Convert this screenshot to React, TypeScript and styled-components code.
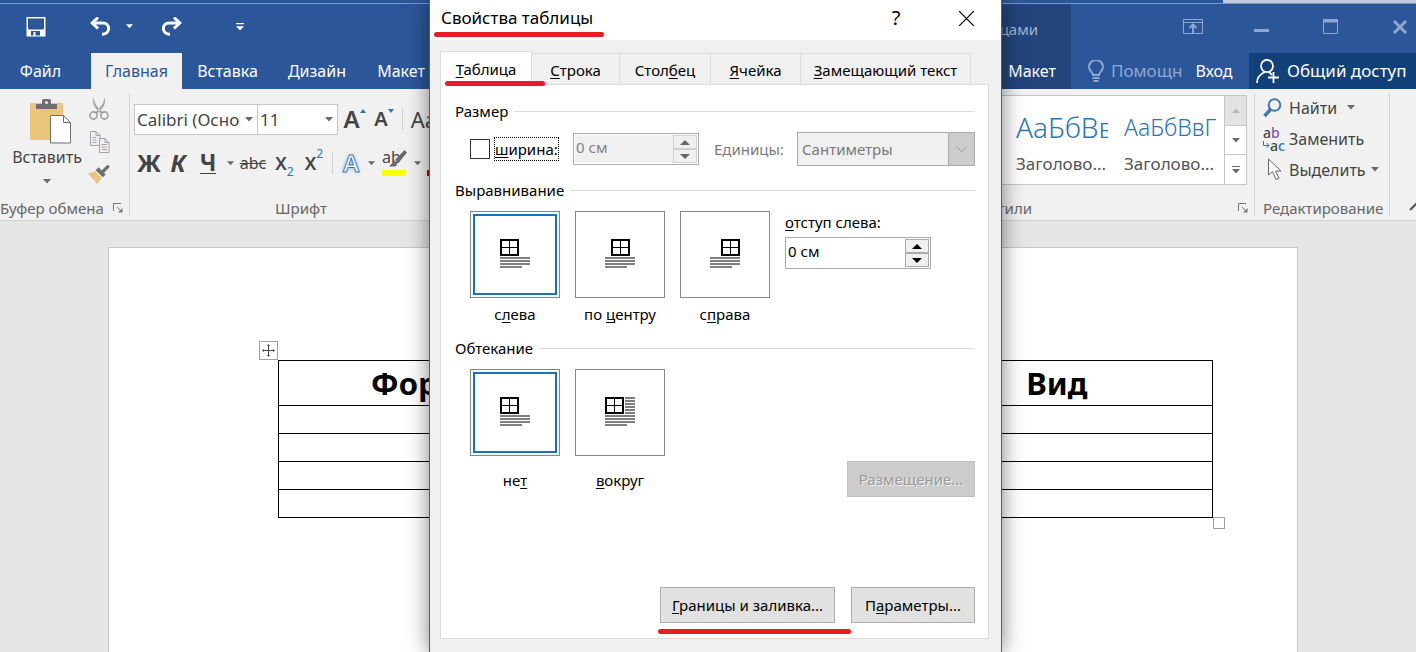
import React from 'react';
import styled, { createGlobalStyle, css } from 'styled-components';

const GlobalStyle = createGlobalStyle`
  *, *::before, *::after { box-sizing: border-box; }
  body { margin: 0; background: #e6e6e6; font-family: "Noto Sans", "Open Sans", sans-serif; }
  button, input, select { font: inherit; color: inherit; margin: 0; }
  button { border: 0; padding: 0; background: none; white-space: nowrap; }
  u { text-underline-offset: 2px; text-decoration-thickness: 1px; }
  p, h1, h2 { margin: 0; font: inherit; }
`;

/* ---------- window frame ---------- */

const Window = styled.div`
  position: relative;
  display: flex;
  flex-direction: column;
  min-height: 100vh;
  overflow: hidden;
`;

const TopStrip = styled.div`
  display: flex;
  justify-content: flex-end;
  height: 4px;
  background: #2b579a;
  border-bottom: 1px solid #8796b3;
`;

const OtherWindow = styled.div`
  width: 193px;
  background: #c3cbdc;
`;

const Header = styled.header`
  display: flex;
  height: 85px;
  background: #2b579a;
  color: #fff;
`;

const HeaderColumn = styled.div<{ $grow?: boolean; $dark?: boolean }>`
  display: flex;
  flex-direction: column;
  ${p => p.$grow && css`flex: 1; min-width: 0;`}
  ${p => p.$dark && css`width: 248px; background: #22457c;`}
`;

const QuickAccess = styled.div`
  display: flex;
  align-items: center;
  height: 49px;
  padding: 0 0 4px 26px;
`;

const QuickButton = styled.button<{ $gap?: number }>`
  display: flex;
  margin-right: ${p => p.$gap ?? 0}px;
`;

const TabRow = styled.nav`
  display: flex;
  height: 36px;
  font-size: 16px;
  line-height: 36px;
`;

const TabGap = styled.span`
  width: 10px;
`;

const RibbonTab = styled.button<{ $width: number; $active?: boolean }>`
  width: ${p => p.$width}px;
  line-height: 36px;
  ${p => p.$active && css`background: #f1f1f1; color: #2b579a;`}
`;

const ContextCaption = styled.p`
  height: 49px;
  padding-right: 33px;
  font-size: 15px;
  line-height: 51px;
  text-align: right;
  color: #a3b4d1;
`;

const ContextTabs = styled(TabRow)`
  justify-content: flex-end;
  padding-right: 4px;
`;

const WindowControls = styled.div`
  display: flex;
  height: 49px;
  padding: 0 0 4px 87px;
`;

const WindowButton = styled.button<{ $edge?: boolean }>`
  display: flex;
  align-items: center;
  justify-content: ${p => (p.$edge ? 'flex-start' : 'center')};
  width: ${p => (p.$edge ? 51 : 69)}px;
  padding-left: ${p => (p.$edge ? 28 : 0)}px;
`;

const HelpButton = styled.button`
  display: flex;
  align-items: center;
  gap: 7px;
  width: 114px;
  padding-left: 17px;
  font-size: 17px;
  color: #8ea7cf;
`;

const SignIn = styled.button`
  width: 64px;
  padding-right: 6px;
  font-size: 16px;
`;

const Share = styled.button`
  display: flex;
  align-items: center;
  gap: 8px;
  flex: none;
  width: 167px;
  padding-left: 7px;
  background: #124078;
  font-size: 17px;
`;

/* ---------- ribbon ---------- */

const Ribbon = styled.div`
  display: flex;
  justify-content: space-between;
  height: 132px;
  padding: 4px 0;
  background: #f1f1f1;
  border-bottom: 1px solid #d2d2d2;
  color: #444;
`;

const Side = styled.div`
  display: flex;
`;

const Group = styled.section<{ $width: number; $divided?: boolean }>`
  display: flex;
  flex-direction: column;
  justify-content: space-between;
  width: ${p => p.$width}px;
  border-right: ${p => (p.$divided ? '1px solid #d2d2d2' : '0')};
`;

const Caption = styled.div<{ $align?: string; $left?: number }>`
  display: flex;
  align-items: center;
  justify-content: ${p => p.$align ?? 'flex-start'};
  height: 16px;
  padding: 0 6px 0 ${p => p.$left ?? 0}px;
  font-size: 15px;
  line-height: 16px;
  color: #666;
  white-space: nowrap;
`;

const ClipboardBody = styled.div`
  display: flex;
  gap: 6px;
  padding: 1px 0 0 12px;
`;

const PasteButton = styled.button`
  display: flex;
  flex-direction: column;
  align-items: center;
  width: 70px;
  padding-top: 4px;
  font-size: 16px;
  line-height: 26px;
  span { padding-bottom: 9px; }
`;

const PasteArt = styled.i`
  display: flex;
  padding-left: 7px;
`;

const SmallIcons = styled.div`
  display: flex;
  flex-direction: column;
  justify-content: space-between;
  height: 95px;
`;

const FontBody = styled.div`
  display: flex;
  flex-direction: column;
  gap: 14px;
  padding: 11px 0 0 4px;
`;

const ToolRow = styled.div`
  display: flex;
  align-items: center;
  height: 30px;
`;

const Combo = styled.div<{ $width: number }>`
  display: flex;
  align-items: center;
  width: ${p => p.$width}px;
  height: 31px;
  margin-right: -1px;
  padding-right: 4px;
  background: #fff;
  border: 1px solid #c6c6c6;
`;

const ComboInput = styled.input`
  flex: 1;
  min-width: 0;
  height: 27px;
  padding: 0 0 0 2px;
  border: 0;
  outline: 0;
  background: none;
  font-size: 17px;
`;

const Tool = styled.button<{ $width: number; $size?: number; $bold?: boolean; $italic?: boolean }>`
  display: flex;
  align-items: center;
  justify-content: center;
  width: ${p => p.$width}px;
  height: 30px;
  font-size: ${p => p.$size ?? 22}px;
  line-height: 30px;
  font-weight: ${p => (p.$bold ? 700 : 400)};
  font-style: ${p => (p.$italic ? 'italic' : 'normal')};
  b { font-weight: 600; }
  sub, sup { font-size: 12px; font-weight: 400; line-height: 12px; color: #2e75b6; }
  sub { align-self: flex-end; }
  sup { align-self: flex-start; }
`;

const SizeTools = styled.div`
  display: flex;
  align-items: center;
  padding-left: 2px;
`;

const Underlined = styled.span`
  height: 21px;
  line-height: 18px;
  border-bottom: 1px solid #444;
`;

const Struck = styled.s`
  text-decoration-thickness: 1px;
`;

const Separator = styled.i`
  width: 1px;
  height: 22px;
  margin: 0 4px;
  background: #d2d2d2;
`;

const GlowLetter = styled.span`
  color: #fff;
  font-weight: 600;
  -webkit-text-stroke: 1px #3f7cba;
  text-shadow: 0 0 4px #7fb2e5;
`;

const Marker = styled.span<{ $color: string }>`
  display: flex;
  align-items: flex-start;
  width: 24px;
  height: 26px;
  font-size: 16px;
  line-height: 14px;
  border-bottom: 6px solid ${p => p.$color};
  svg { margin-left: -12px; flex: none; }
`;

const Gallery = styled.div`
  display: flex;
  height: 90px;
  margin: 2px 7px 0 0;
  border: 1px solid #c6c6c6;
  background: #fff;
`;

const GalleryItems = styled.div`
  display: flex;
  flex: 1;
  gap: 16px;
  justify-content: flex-end;
  padding-right: 8px;
`;

const StyleItem = styled.button`
  display: flex;
  flex-direction: column;
  justify-content: flex-end;
  width: 92px;
  overflow: hidden;
  padding-bottom: 8px;
  text-align: left;
  font-size: 17px;
  line-height: 24px;
  color: #555;
`;

const Sample = styled.span<{ $size: number }>`
  font-size: ${p => p.$size}px;
  line-height: 50px;
  font-weight: 300;
  color: #2e74b5;
`;

const GalleryScroll = styled.div`
  display: flex;
  flex-direction: column;
  width: 22px;
`;

const ScrollButton = styled.button<{ $off?: boolean }>`
  display: flex;
  align-items: center;
  justify-content: center;
  flex: 1;
  border-left: 1px solid #c6c6c6;
  background: ${p => (p.$off ? '#e3e3e3' : '#fff')};
  & + & { border-top: 1px solid #c6c6c6; }
`;

const EditList = styled.div`
  display: flex;
  flex-direction: column;
  padding-left: 8px;
`;

const EditButton = styled.button`
  display: flex;
  align-items: center;
  height: 31px;
  padding-bottom: 2px;
  font-size: 16px;
`;

const EditIcon = styled.span`
  display: flex;
  width: 26px;
`;

const EditLabel = styled.span<{ $gap: number }>`
  margin-right: ${p => p.$gap}px;
`;

const ReplaceGlyph = styled.span`
  display: flex;
  flex-direction: column;
  font-size: 14px;
  font-weight: 500;
  line-height: 13px;
  text-align: left;
  span { display: flex; align-items: center; }
  b { color: #8e4fb0; font-weight: 500; }
  em { color: #2e75b6; font-style: normal; }
`;

const CollapseCorner = styled.div`
  display: flex;
  align-items: flex-end;
  justify-content: flex-end;
  width: 26px;
  overflow: hidden;
`;

/* ---------- document ---------- */

const Canvas = styled.main`
  display: flex;
  flex: 1;
  padding: 26px 118px 0 108px;
  background: #e6e6e6;
`;

const Sheet = styled.div`
  flex: 1;
  padding: 112px 84px 0 169px;
  background: #fff;
  border: 1px solid #c6c6c6;
  border-bottom: 0;
`;

const TableFrame = styled.div`
  position: relative;
`;

const WordTable = styled.table`
  width: 100%;
  table-layout: fixed;
  border-collapse: collapse;
  th, td { border: 1px solid #000; padding: 0; height: 28px; }
  th { height: 45px; font-size: 31px; line-height: 40px; font-weight: 700; color: #000; }
`;

const MoveHandle = styled.button`
  position: absolute;
  left: -19px;
  top: -19px;
  display: flex;
  align-items: center;
  justify-content: center;
  width: 19px;
  height: 19px;
  background: #fff;
  border: 1px solid #a0a0a0;
`;

const SizeHandle = styled.span`
  position: absolute;
  right: -12px;
  bottom: -11px;
  width: 12px;
  height: 12px;
  background: #fff;
  border: 1px solid #a0a0a0;
`;

/* ---------- dialog ---------- */

const Dialog = styled.div`
  position: absolute;
  top: 0;
  bottom: 0;
  left: 429px;
  width: 573px;
  background: #f0f0f0;
  border: solid #5c5c5c;
  border-width: 0 1px;
  box-shadow: 0 0 20px rgba(0, 0, 0, 0.5);
  font-size: 15px;
  line-height: 20px;
  color: #000;
`;

const TitleBar = styled.div`
  position: relative;
  display: flex;
  align-items: center;
  height: 40px;
  padding: 0 26px 4px 11px;
  background: #fff;
`;

const DialogTitle = styled.h1`
  flex: 1;
  font-size: 17px;
  line-height: 24px;
`;

const TitleButton = styled.button<{ $gap?: number }>`
  display: flex;
  justify-content: center;
  width: 18px;
  margin-right: ${p => p.$gap ?? 0}px;
  font-size: 20px;
  line-height: 24px;
`;

const RedMark = styled.span<{ $left: number; $width: number; $bottom: number }>`
  position: absolute;
  z-index: 2;
  left: ${p => p.$left}px;
  bottom: ${p => p.$bottom}px;
  width: ${p => p.$width}px;
  height: 5px;
  border-radius: 3px;
  background: #e71d25;
`;

const DialogTabs = styled.div`
  position: relative;
  display: flex;
  align-items: flex-end;
  height: 44px;
  padding-left: 10px;
`;

const DialogTab = styled.button<{ $width: number; $active?: boolean }>`
  width: ${p => p.$width}px;
  height: 31px;
  padding-top: 2px;
  border: 1px solid #dcdcdc;
  border-width: 1px 1px 0 0;
  ${p => p.$active && css`
    z-index: 1;
    height: 34px;
    margin-bottom: -1px;
    border-left-width: 1px;
    background: #fff;
    padding-bottom: 1px;
  `}
`;

const Panel = styled.div`
  margin: 0 12px 0 10px;
  padding: 16px 13px 15px 14px;
  background: #fff;
  border: 1px solid #dcdcdc;
`;

const Heading = styled.h2<{ $top?: number }>`
  display: flex;
  align-items: center;
  gap: 6px;
  margin-top: ${p => p.$top ?? 0}px;
  &::after { content: ""; flex: 1; height: 1px; background: #dcdcdc; }
`;

const SizeRow = styled.div`
  display: flex;
  align-items: center;
  height: 34px;
  margin-top: 11px;
  padding-left: 15px;
`;

const Check = styled.input`
  appearance: none;
  width: 20px;
  height: 20px;
  margin-right: 4px;
  background: #fff;
  border: 1px solid #333;
`;

const CheckLabel = styled.label`
  flex: none;
  width: 65px;
  height: 24px;
  margin-right: 14px;
  line-height: 22px;
  border: 1px dotted #000;
  white-space: nowrap;
`;

const Spin = styled.div<{ $width: number; $disabled?: boolean }>`
  display: flex;
  flex: none;
  width: ${p => p.$width}px;
  height: 32px;
  padding: 1px;
  background: #fff;
  border: 1px solid #ababab;
  color: ${p => (p.$disabled ? '#838383' : '#000')};
`;

const SpinInput = styled.input`
  flex: 1;
  min-width: 0;
  padding: 0 0 4px 1px;
  border: 0;
  background: #fff;
  &:disabled { background: #f0f0f0; }
`;

const SpinButtons = styled.div`
  display: flex;
  flex-direction: column;
  width: 24px;
`;

const SpinButton = styled.button`
  display: flex;
  align-items: center;
  justify-content: center;
  flex: 1;
  background: #f0f0f0;
  border: 1px solid #ababab;
  &:disabled { border-color: #d0d0d0; }
`;

const UnitLabel = styled.label`
  flex: none;
  width: 98px;
  padding-left: 15px;
  color: #7a7a7a;
`;

const SelectFrame = styled.div`
  position: relative;
  flex: 1;
  display: flex;
`;

const UnitSelect = styled.select`
  appearance: none;
  flex: 1;
  height: 34px;
  padding: 0 30px 0 4px;
  border: 1px solid #ababab;
  border-radius: 0;
  background: #f0f0f0;
  color: #7a7a7a;
  opacity: 1;
`;

const SelectArrow = styled.span`
  position: absolute;
  top: 0;
  right: 0;
  display: flex;
  align-items: center;
  justify-content: center;
  width: 27px;
  height: 34px;
  background: #cccccc;
  border: 1px solid #ababab;
  pointer-events: none;
`;

const Options = styled.div`
  display: flex;
  align-items: flex-start;
  gap: 15px;
  margin-top: 11px;
  padding-left: 15px;
`;

const OptionLabel = styled.label<{ $gap: number }>`
  display: flex;
  flex-direction: column;
  align-items: center;
  gap: ${p => p.$gap}px;
  width: 90px;
  white-space: nowrap;
`;

const OptionRadio = styled.input`
  position: absolute;
  opacity: 0;
`;

const OptionBox = styled.span`
  display: flex;
  width: 90px;
  height: 87px;
  padding: 2px;
  background: #fff;
  border: 1px solid #87878a;
  ${OptionRadio}:checked + & { background: #f0fcff; }
`;

const OptionInner = styled.span`
  display: flex;
  align-items: center;
  justify-content: center;
  flex: 1;
  padding-bottom: 2px;
  background: #fff;
  border: 2px solid #fff;
  ${OptionRadio}:checked + ${OptionBox} > & { border-color: #1c73b4; }
`;

const Indent = styled.div`
  display: flex;
  flex-direction: column;
  gap: 5px;
  padding-top: 1px;
`;

const DialogButton = styled.button<{ $width: number }>`
  width: ${p => p.$width}px;
  height: 36px;
  background: #e1e1e1;
  border: 1px solid #adadad;
  &:disabled {
    background: #cccccc;
    border-color: #bfbfbf;
    color: #9a9a9a;
    text-shadow: 1px 1px 0 #f4f4f4;
  }
`;

const PositionButton = styled(DialogButton)`
  margin: 92px 0 0 auto;
`;

const ButtonRow = styled.div`
  position: relative;
  display: flex;
  justify-content: flex-end;
  gap: 16px;
  margin-top: 90px;
`;

/* ---------- drawings ---------- */

const Caret = ({ color = '#6a6a6a', width = 8, up }: { color?: string; width?: number; up?: boolean }) => (
  <svg width={width} height="5" viewBox="0 0 8 5"><path d={up ? 'M0 5h8L4 .4z' : 'M0 0h8L4 4.6z'} fill={color} /></svg>
);

const Arrow = ({ up, color }: { up?: boolean; color: string }) => (
  <svg width="10" height="5" viewBox="0 0 10 5"><path d={up ? 'M0 5h10L5 0z' : 'M0 0h10L5 5z'} fill={color} /></svg>
);

const Launcher = () => (
  <svg width="10" height="10" viewBox="0 0 10 10" fill="none" stroke="#777">
    <path d="M.5 8V.5H8M4 4l4 4" /><path d="M9.5 5v4.500H5z" fill="#777" stroke="none" />
  </svg>
);

const SaveIcon = () => (
  <svg width="20" height="20" viewBox="0 0 20 20" fill="#fff">
    <path fillRule="evenodd" d="M.5 0h19v19.500H.5zM2 1.500v10l1 1h14l1-1v-10zM5 14v4.500h2.500V15h2v3.500H14V14z" />
  </svg>
);

const TurnIcon = ({ flip }: { flip?: boolean }) => (
  <svg width="22" height="19" viewBox="0 0 22 19" fill="none" stroke="#fff" strokeWidth="3">
    <g transform={flip ? 'matrix(-1 0 0 1 22 0)' : undefined}>
      <path d="M2 6h11a5.500 5.500 0 0 1 0 11.200h-1" /><path d="M8 .5 2.200 6 8 11.500" />
    </g>
  </svg>
);

const ClipboardIcon = () => (
  <svg width="42" height="46" viewBox="0 0 42 46">
    <rect x="0" y="5" width="33" height="37" rx="1" fill="#ecc57c" />
    <path d="M6 6h6V3q0-2 2-2h5q2 0 2 2v3h6v5H6z" fill="#6f6f6f" /><circle cx="16.500" cy="4.500" r="1.500" fill="#f1f1f1" />
    <path d="M20.500 17.500h13l7 7v20.500h-20z" fill="#fff" stroke="#6f6f6f" /><path d="M33.500 17.500v7h7" fill="none" stroke="#6f6f6f" />
  </svg>
);

const CutIcon = () => (
  <svg width="20" height="22" viewBox="0 0 20 22" fill="none" stroke="#9f9f9f" strokeWidth="1.600">
    <circle cx="4.500" cy="17.500" r="3.600" /><circle cx="15.500" cy="17.500" r="3.600" />
    <path d="M4.500 0C5 5 7 8 13.500 14.500L12 15.500C6 10 3 6 4.500 0zM15.500 0C15 5 13 8 6.500 14.500L8 15.500C14 10 17 6 15.500 0z" fill="#9f9f9f" strokeWidth=".3" />
  </svg>
);

const CopyIcon = () => (
  <svg width="21" height="22" viewBox="0 0 21 22" fill="#f1f1f1" stroke="#a5a0a8">
    <path d="M1.500.5H7l4 4v10H1.500z" /><path d="M7 .5v4h4M3.500 6.500h4M3.500 9h4M3.500 11.500h4" fill="none" />
    <path d="M10.500 7.500H16l4 4v10h-9.500z" /><path d="M16 7.500v4h4M12.500 13.500H18M12.500 16H18M12.500 18.500H18" fill="none" />
  </svg>
);

const BrushIcon = () => (
  <svg width="23" height="21" viewBox="0 0 23 21">
    <path d="M0 9.500 7.500 7l7 7.500-5 6z" fill="#ecc57c" />
    <path d="M8 6 11 3l7.500 7.500-3 3z" fill="#6f6f6f" />
    <path d="M14 6.500 19.500 1q1.500-1 2.500 0t0 2.500L16.500 9z" fill="#6f6f6f" />
  </svg>
);

const PenIcon = () => (
  <svg width="18" height="18" viewBox="0 0 18 18"><path d="M15.500 0 18 2.500 9.500 13 6 10zM5 11l3.500 3-2 2.500H0z" fill="#6b6b6b" /></svg>
);

const BulbIcon = () => (
  <svg width="16" height="22" viewBox="0 0 16 22" fill="none" stroke="#8ea7cf" strokeWidth="2">
    <path d="M5 15c0-3-4-4-4-8a7 7 0 0 1 14 0c0 4-4 5-4 8z" /><path d="M4.500 18h7M5.500 21h5" />
  </svg>
);

const PersonIcon = () => (
  <svg width="23" height="25" viewBox="0 0 23 25" fill="none" stroke="#fff" strokeWidth="1.800">
    <ellipse cx="11" cy="7" rx="6" ry="6.200" /><path d="M1 24c0-5 3-9 8-11M13 13l3 3M17.500 13v11M12 18.500h11" />
  </svg>
);

const SearchIcon = () => (
  <svg width="19" height="20" viewBox="0 0 19 20" fill="none" stroke="#3e79b4">
    <circle cx="11.500" cy="7" r="5.800" strokeWidth="2" /><path d="M7.500 11.500 1.500 18" strokeWidth="3.500" />
  </svg>
);

const PointerIcon = () => (
  <svg width="20" height="23" viewBox="0 0 20 23"><path d="M5.500 1v16l4-3.500 3.500 8 3-1.300-3.500-7.200H18z" fill="#fff" stroke="#666" /></svg>
);

const gridLines = [18, 21, 24];

const Pictogram = ({ offset, wrap }: { offset: number; wrap?: boolean }) => (
  <svg width="30" height="29" viewBox="0 0 30 29" shapeRendering="crispEdges">
    <rect x={offset + 1} y="1" width="17" height="15" fill="#fff" stroke="#000" strokeWidth="2" />
    <path d={`M${offset + 9.5} 1v15M${offset + 1} 8.500h17`} stroke="#000" />
    {gridLines.map(y => <rect key={y} x="0" y={y} width="30" height="2" fill="#808080" />)}
    <rect x="0" y="27" width="22" height="2" fill="#808080" />
    {wrap && [0, 3, 6, 9, 12, 15].map(y => <rect key={y} x="20" y={y} width="10" height="2" fill="#808080" />)}
  </svg>
);

/* ---------- parts ---------- */

interface OptionProps {
  name: string;
  gap: number;
  offset: number;
  wrap?: boolean;
  checked?: boolean;
  children: React.ReactNode;
}

const Option = ({ name, gap, offset, wrap, checked, children }: OptionProps) => (
  <OptionLabel $gap={gap}>
    <OptionRadio type="radio" name={name} defaultChecked={checked} />
    <OptionBox><OptionInner><Pictogram offset={offset} wrap={wrap} /></OptionInner></OptionBox>
    <span>{children}</span>
  </OptionLabel>
);

const SpinBox = ({ id, width, disabled, label }: { id: string; width: number; disabled?: boolean; label?: string }) => {
  const color = disabled ? '#666' : '#000';
  return (
    <Spin $width={width} $disabled={disabled}>
      <SpinInput id={id} aria-label={label} defaultValue="0 см" disabled={disabled} />
      <SpinButtons>
        <SpinButton aria-label="Больше" disabled={disabled}><Arrow up color={color} /></SpinButton>
        <SpinButton aria-label="Меньше" disabled={disabled}><Arrow color={color} /></SpinButton>
      </SpinButtons>
    </Spin>
  );
};

const AppHeader = () => (
  <Header>
    <HeaderColumn $grow>
      <QuickAccess>
        <QuickButton aria-label="Сохранить" $gap={44}><SaveIcon /></QuickButton>
        <QuickButton aria-label="Отменить" $gap={14}><TurnIcon /></QuickButton>
        <QuickButton aria-label="Список отмены" $gap={27}><Caret color="#fff" width={7} /></QuickButton>
        <QuickButton aria-label="Повторить" $gap={54}><TurnIcon flip /></QuickButton>
        <QuickButton aria-label="Настройка панели">
          <svg width="8" height="8" viewBox="0 0 8 8" fill="#fff"><path d="M0 0h8v1.300H0zM0 3.200h8L4 7.500z" /></svg>
        </QuickButton>
      </QuickAccess>
      <TabRow>
        <RibbonTab $width={81}>Файл</RibbonTab>
        <TabGap />
        <RibbonTab $width={91} $active>Главная</RibbonTab>
        <RibbonTab $width={91}>Вставка</RibbonTab>
        <RibbonTab $width={88}>Дизайн</RibbonTab>
        <RibbonTab $width={80}>Макет</RibbonTab>
      </TabRow>
    </HeaderColumn>
    <HeaderColumn $dark>
      <ContextCaption>цами</ContextCaption>
      <ContextTabs><RibbonTab $width={70}>Макет</RibbonTab></ContextTabs>
    </HeaderColumn>
    <HeaderColumn>
      <WindowControls>
        <WindowButton aria-label="Параметры отображения ленты">
          <svg width="20" height="15" viewBox="0 0 20 15" fill="none" stroke="#8ea7cf">
            <path d="M.5.500h19v14H.5zM.5 3.500h19" /><path d="M10 14V6M6.500 9 10 5.500 13.500 9" strokeWidth="2" />
          </svg>
        </WindowButton>
        <WindowButton aria-label="Свернуть">
          <svg width="15" height="11"><path d="M0 8h15v3H0z" fill="#8ea7cf" /></svg>
        </WindowButton>
        <WindowButton aria-label="Развернуть">
          <svg width="15" height="15" fill="none" stroke="#8ea7cf"><path d="M.5.500h14v14H.5z" /><path d="M0 2h15" strokeWidth="3" /></svg>
        </WindowButton>
        <WindowButton $edge aria-label="Закрыть">
          <svg width="14" height="14" stroke="#8ea7cf" strokeWidth="3"><path d="M1 1l12 12M13 1 1 13" /></svg>
        </WindowButton>
      </WindowControls>
      <TabRow>
        <HelpButton><BulbIcon />Помощн</HelpButton>
        <SignIn>Вход</SignIn>
        <Share><PersonIcon />Общий доступ</Share>
      </TabRow>
    </HeaderColumn>
  </Header>
);

const AppRibbon = () => (
  <Ribbon>
    <Side>
      <Group $width={130} $divided>
        <ClipboardBody>
          <PasteButton><PasteArt><ClipboardIcon /></PasteArt><span>Вставить</span><Caret /></PasteButton>
          <SmallIcons>
            <Tool $width={22} aria-label="Вырезать"><CutIcon /></Tool>
            <Tool $width={22} aria-label="Копировать"><CopyIcon /></Tool>
            <Tool $width={22} aria-label="Формат по образцу"><BrushIcon /></Tool>
          </SmallIcons>
        </ClipboardBody>
        <Caption $align="space-between">Буфер обмена<Launcher /></Caption>
      </Group>
      <Group $width={348}>
        <FontBody>
          <ToolRow>
            <Combo $width={124}><ComboInput aria-label="Шрифт" defaultValue="Calibri (Осно" /><Caret /></Combo>
            <Combo $width={81}><ComboInput aria-label="Размер шрифта" defaultValue="11" /><Caret /></Combo>
            <SizeTools>
              <Tool $width={31} $size={24} aria-label="Увеличить размер">
                <b>А</b><svg width="6" height="22"><path d="M0 5h6L3 1z" fill="#2e75b6" /></svg>
              </Tool>
              <Tool $width={28} $size={20} aria-label="Уменьшить размер">
                <b>А</b><svg width="6" height="22"><path d="M0 1h6L3 5z" fill="#2e75b6" /></svg>
              </Tool>
            </SizeTools>
            <Separator />
            <Tool $width={34} $size={22}>Aa</Tool>
          </ToolRow>
          <ToolRow>
            <Tool $width={30} $size={24} $bold>Ж</Tool>
            <Tool $width={28} $size={24} $bold $italic>К</Tool>
            <Tool $width={32} $size={23} $bold><Underlined>Ч</Underlined></Tool>
            <Tool $width={13} aria-label="Вид подчёркивания"><Caret width={7} /></Tool>
            <Tool $width={32} $size={16}><Struck>abc</Struck></Tool>
            <Tool $width={31} $size={18}><b>X</b><sub>2</sub></Tool>
            <Tool $width={28} $size={18}><b>X</b><sup>2</sup></Tool>
            <Separator />
            <Tool $width={28} $size={24}><GlowLetter>A</GlowLetter></Tool>
            <Tool $width={12} aria-label="Эффекты текста"><Caret width={7} /></Tool>
            <Tool $width={34}><Marker $color="#ffff00">ab<PenIcon /></Marker></Tool>
            <Tool $width={12} aria-label="Цвет выделения"><Caret width={7} /></Tool>
            <Tool $width={32} aria-label="Цвет текста"><Marker $color="#d00000" /></Tool>
          </ToolRow>
        </FontBody>
        <Caption $align="center">Шрифт</Caption>
      </Group>
    </Side>
    <Side>
      <Group $width={270} $divided>
        <Gallery>
          <GalleryItems>
            <StyleItem><Sample $size={28}>АаБбВв</Sample>Заголово...</StyleItem>
            <StyleItem><Sample $size={23}>АаБбВвГ</Sample>Заголово...</StyleItem>
          </GalleryItems>
          <GalleryScroll>
            <ScrollButton $off aria-label="Вверх"><Caret up color="#b5b5b5" /></ScrollButton>
            <ScrollButton aria-label="Вниз"><Caret /></ScrollButton>
            <ScrollButton aria-label="Все стили">
              <svg width="8" height="8" viewBox="0 0 8 8" fill="#6a6a6a"><path d="M0 0h8v1H0zM0 3h8L4 7.500z" /></svg>
            </ScrollButton>
          </GalleryScroll>
        </Gallery>
        <Caption $align="space-between" $left={3}>Стили<Launcher /></Caption>
      </Group>
      <Group $width={135} $divided>
        <EditList>
          <EditButton><EditIcon><SearchIcon /></EditIcon><EditLabel $gap={10}>Найти</EditLabel><Caret /></EditButton>
          <EditButton>
            <EditIcon>
              <ReplaceGlyph>
                <span>a<b>b</b></span>
                <span>
                  <svg width="7" height="8" fill="none" stroke="#2e75b6"><path d="M.5 0v4.500H6M3.500 2 6 4.500 3.500 7" /></svg>
                  a<em>c</em>
                </span>
              </ReplaceGlyph>
            </EditIcon>
            Заменить
          </EditButton>
          <EditButton><EditIcon><PointerIcon /></EditIcon><EditLabel $gap={5}>Выделить</EditLabel><Caret /></EditButton>
        </EditList>
        <Caption $left={8}>Редактирование</Caption>
      </Group>
      <CollapseCorner>
        <svg width="7" height="14" fill="none" stroke="#555" strokeWidth="2"><path d="M1 8 7 2 13 8" /></svg>
      </CollapseCorner>
    </Side>
  </Ribbon>
);

const AppDocument = () => (
  <Canvas>
    <Sheet>
      <TableFrame>
        <MoveHandle aria-label="Переместить таблицу">
          <svg width="13" height="13" viewBox="0 0 13 13" fill="#444" stroke="#444">
            <path d="M6.500 1v11M1 6.500h11" />
            <path d="M6.500 0 8 2H5zM6.500 13 8 11H5zM0 6.500 2 5v3zM13 6.500 11 5v3z" stroke="none" />
          </svg>
        </MoveHandle>
        <WordTable>
          <thead><tr><th>Формат</th><th /><th>Вид</th></tr></thead>
          <tbody>{[0, 1, 2, 3].map(row => <tr key={row}><td /><td /><td /></tr>)}</tbody>
        </WordTable>
        <SizeHandle />
      </TableFrame>
    </Sheet>
  </Canvas>
);

const TableDialog = () => (
  <Dialog role="dialog" aria-label="Свойства таблицы">
    <TitleBar>
      <DialogTitle>Свойства таблицы</DialogTitle>
      <TitleButton $gap={52}>?</TitleButton>
      <TitleButton aria-label="Закрыть окно">
        <svg width="15" height="15" stroke="#000" strokeWidth="1.200"><path d="M0 0l15 15M15 0 0 15" /></svg>
      </TitleButton>
      <RedMark $left={4} $width={170} $bottom={3} />
    </TitleBar>
    <DialogTabs>
      <DialogTab $width={92} $active><u>Т</u>аблица</DialogTab>
      <DialogTab $width={88}><u>С</u>трока</DialogTab>
      <DialogTab $width={91}>Стол<u>б</u>ец</DialogTab>
      <DialogTab $width={90}><u>Я</u>чейка</DialogTab>
      <DialogTab $width={170}><u>З</u>амещающий текст</DialogTab>
      <RedMark $left={15} $width={100} $bottom={-2} />
    </DialogTabs>
    <Panel>
      <Heading>Размер</Heading>
      <SizeRow>
        <Check id="width-on" type="checkbox" />
        <CheckLabel htmlFor="width-on"><u>ш</u>ирина:</CheckLabel>
        <SpinBox id="width" width={126} disabled label="Ширина" />
        <UnitLabel htmlFor="units">Единицы:</UnitLabel>
        <SelectFrame>
          <UnitSelect id="units" disabled><option>Сантиметры</option></UnitSelect>
          <SelectArrow>
            <svg width="11" height="7" fill="none" stroke="#9a9a9a"><path d="M.5.500 5.500 5.500 10.500.5" /></svg>
          </SelectArrow>
        </SelectFrame>
      </SizeRow>
      <Heading $top={14}>Выравнивание</Heading>
      <Options>
        <Option name="align" gap={6} offset={0} checked>с<u>л</u>ева</Option>
        <Option name="align" gap={6} offset={6}>по <u>ц</u>ентру</Option>
        <Option name="align" gap={6} offset={11}>с<u>п</u>рава</Option>
        <Indent>
          <label htmlFor="indent"><u>о</u>тступ слева:</label>
          <SpinBox id="indent" width={146} />
        </Indent>
      </Options>
      <Heading $top={14}>Обтекание</Heading>
      <Options>
        <Option name="wrap" gap={14} offset={0} checked>не<u>т</u></Option>
        <Option name="wrap" gap={14} offset={0} wrap><u>в</u>округ</Option>
        <PositionButton $width={128} disabled>Размещение...</PositionButton>
      </Options>
      <ButtonRow>
        <DialogButton $width={175}><u>Г</u>раницы и заливка...</DialogButton>
        <DialogButton $width={124}>П<u>а</u>раметры...</DialogButton>
        <RedMark $left={203} $width={193} $bottom={-11} />
      </ButtonRow>
    </Panel>
  </Dialog>
);

export default function App() {
  return (
    <Window>
      <GlobalStyle />
      <TopStrip><OtherWindow /></TopStrip>
      <AppHeader />
      <AppRibbon />
      <AppDocument />
      <TableDialog />
    </Window>
  );
}
